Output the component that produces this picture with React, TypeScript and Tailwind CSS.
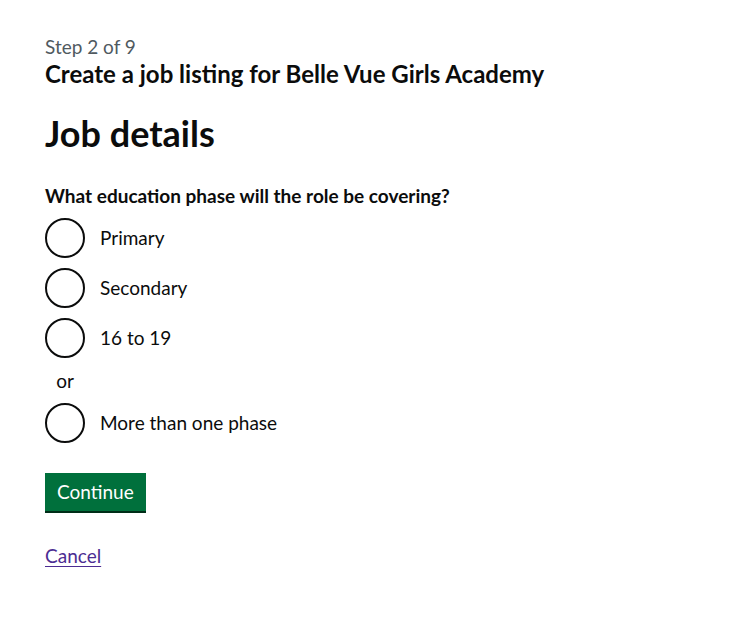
const phases = ["Primary", "Secondary", "16 to 19"];

function Radio({ label, last }: { label: string; last?: boolean }) {
  return (
    <label className={`flex items-start min-h-10 cursor-pointer ${last ? "mb-0" : "mb-[10px]"}`}>
      <span className="w-10 h-10 shrink-0 rounded-full border-2 border-[#0b0c0c] bg-white" />
      <span className="pt-[7px] pb-[6px] px-[15px] text-[19px] leading-[25px]">{label}</span>
    </label>
  );
}

export default function App() {
  return (
    <div className="min-h-[617px] bg-white text-[#0b0c0c] font-['Lato',sans-serif] px-[45px] pt-[34px]">
      <span className="block text-[19px] leading-[25px] text-[#505a5f]">Step 2 of 9</span>
      <h2 className="text-[24px] leading-[30px] font-bold">Create a job listing for Belle Vue Girls Academy</h2>

      <h1 className="mt-6 mb-[30px] text-[36px] leading-10 font-bold">Job details</h1>

      <fieldset className="mb-[30px]">
        <legend className="mb-[10px] text-[19px] leading-[25px] font-bold">
          What education phase will the role be covering?
        </legend>
        {phases.map((p) => (
          <Radio key={p} label={p} />
        ))}
        <div className="w-10 mb-[10px] text-center text-[19px] leading-[25px]">or</div>
        <Radio label="More than one phase" last />
      </fieldset>

      <button className="block bg-[#00703c] text-white text-[19px] leading-[19px] pt-[9px] pb-[10px] px-3 shadow-[0_2px_0_#002d18] mb-[32px]">
        Continue
      </button>

      <a href="#" className="text-[19px] leading-[25px] text-[#4c2c92] underline underline-offset-[3px] decoration-1">
        Cancel
      </a>
    </div>
  );
}
